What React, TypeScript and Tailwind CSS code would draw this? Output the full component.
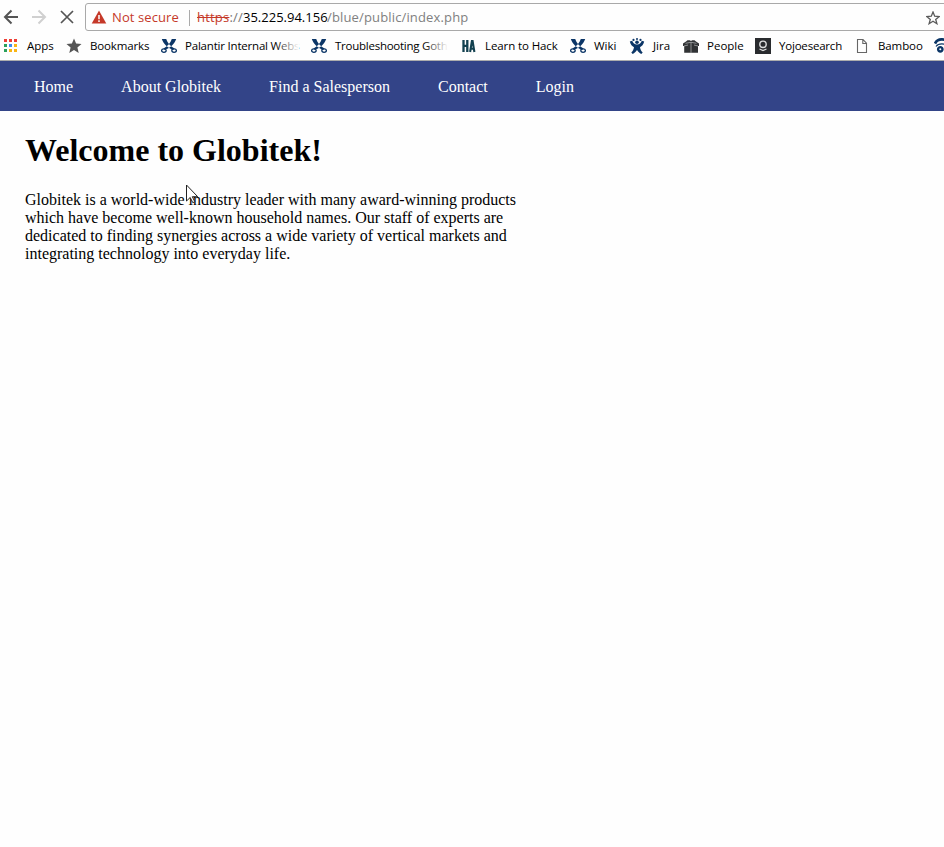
import type { ReactNode } from "react";

const NAVY = "#0b3566";

function AppsIcon() {
  const colors = ["#ee3f35", "#ee3f35", "#ee3f35", "#2aa05c", "#3c8af0", "#f9b514", "#2aa05c", "#f9b514", "#f9b514"];
  return (
    <svg width="16" height="16" viewBox="0 0 16 16" shapeRendering="crispEdges">
      {colors.map((c, i) => (
        <rect key={i} x={1 + (i % 3) * 5} y={1 + Math.floor(i / 3) * 5} width="3" height="3" fill={c} />
      ))}
    </svg>
  );
}

function StarIcon() {
  return (
    <svg width="16" height="16" viewBox="0 0 16 16">
      <path d="M8 .6l2.1 5 5.4.5-4.1 3.5 1.3 5.3L8 12.1l-4.7 2.8 1.3-5.3L.5 6.1l5.400-.5z" fill="#555" />
    </svg>
  );
}

function CrossedIcon() {
  return (
    <svg width="16" height="16" viewBox="0 0 16 16" fill="none" stroke={NAVY}>
      <path d="M.8 1h4.4C6.500 4.800 9 8 13.500 10.500l-1.500 1.500C6.500 9.500 2.500 6 .8 1zM15.200 1h-4.400C9.500 4.800 7 8 2.500 10.500L4 12c5.500-2.500 9.500-6 11.200-11z" fill={NAVY} stroke="none" />
      <ellipse cx="2.900" cy="12.600" rx="2.300" ry="1.700" strokeWidth="1.300" />
      <ellipse cx="13.100" cy="12.600" rx="2.300" ry="1.700" strokeWidth="1.300" />
    </svg>
  );
}

function HackIcon() {
  return (
    <svg width="16" height="16" viewBox="0 0 16 16" fill="none" stroke="#12404f">
      <path d="M2.500 2v12M6.300 2v12M2.500 7.800h4" strokeWidth="2.300" />
      <path d="M9.100 14l1.800-11h.7l1.800 11M10 10.700h3" strokeWidth="2.100" />
    </svg>
  );
}

function JiraIcon() {
  return (
    <svg width="16" height="16" viewBox="0 0 16 16" fill={NAVY}>
      <path d="M.8 3.500l2.400-.7c.8 2.400 2.300 3.700 4.800 3.700s4-1.300 4.800-3.700l2.400.7c-.7 3-2.400 4.800-4.200 5.700.3 2.300 1.300 4 2.700 5.400L12.300 16c-1.800-1-3.200-2.300-4.300-4-1.100 1.700-2.500 3-4.300 4l-1.400-1.400C3.700 13.200 4.700 11.500 5 9.200 3.200 8.300 1.500 6.500.8 3.500z" />
      <circle cx="8" cy="4.300" r="1.800" />
      <circle cx="4.500" cy="1.900" r="1.100" />
      <circle cx="8" cy="1.100" r="1" />
      <circle cx="11.500" cy="1.900" r="1.100" />
    </svg>
  );
}

function PeopleIcon() {
  return (
    <svg width="16" height="16" viewBox="0 0 16 16">
      <path d="M0 5.500l3-2 1.500-1.300h2.300L8 3l1.200-.8h2.300L13 3.500l3 2V8h-1v6.800H1.200V8H0z" fill="#303234" />
      <path d="M2.500 5.300L8 4.300l5.500 1M8 4.300v10.500M1 8l4-1M15 8l-4-1" stroke="#b9babb" strokeWidth=".7" fill="none" />
    </svg>
  );
}

function SearchTileIcon() {
  return (
    <svg width="16" height="16" viewBox="0 0 16 16">
      <path d="M0 0h16v16H0z" fill="#292b2e" />
      <circle cx="8" cy="6.300" r="3.200" fill="none" stroke="#ddd" strokeWidth="1.400" />
      <path d="M4.500 11L8 12.500l3.500-1.500" fill="none" stroke="#ddd" strokeWidth="1.300" />
    </svg>
  );
}

function PageIcon() {
  return (
    <svg width="16" height="16" viewBox="0 0 16 16" fill="none" stroke="#666" strokeWidth="1.100">
      <path d="M3.500 1.500h5.500l3.500 3.700v9.300h-9zM8.800 1.500v4h3.700" />
    </svg>
  );
}

function SwirlIcon() {
  return (
    <svg width="16" height="16" viewBox="0 0 16 16" fill="none" stroke={NAVY}>
      <path d="M1 5.500C3 1.500 8 .3 15 3" strokeWidth="2.800" />
      <path d="M2 8.500C4 5.800 7 5.300 12 6.500" strokeWidth="1.200" />
      <circle cx="6.300" cy="11.300" r="2.200" strokeWidth="2.400" />
    </svg>
  );
}

type BookmarkProps = { icon: ReactNode; label: string; width: string; tracking?: string; faded?: boolean };

function Bookmark({ icon, label, width, tracking = "", faded }: BookmarkProps) {
  return (
    <div className={`flex shrink-0 items-center gap-2 ${width}`}>
      <span className="h-4 w-4 shrink-0">{icon}</span>
      <span className={`relative whitespace-nowrap leading-4 ${tracking}`}>
        {label}
        {faded && <span className="absolute inset-y-0 right-0 w-6 bg-linear-to-r from-transparent to-[#fefefe]" />}
      </span>
    </div>
  );
}

export default function App() {
  return (
    <div className="h-[847px] w-[944px] overflow-hidden bg-[#fefefe] font-['Liberation_Serif',serif] text-black">
      <header className="h-[61px] border-b border-[#adadad] font-['Open_Sans',sans-serif]">
        <div className="flex h-[31px] items-end">
          <div className="flex h-[28px] w-[85px] items-center">
            <svg width="85" height="28" viewBox="0 0 85 28" fill="none" strokeWidth="2">
              <path d="M18 14H5M11.500 7.500L5 14l6.500 6.500" stroke="#555" />
              <path d="M32 14h13M38.500 7.500L45 14l-6.500 6.500" stroke="#d0d0d0" />
              <path d="M61 8l12 12M73 8L61 20" stroke="#555" strokeWidth="1.700" />
            </svg>
          </div>
          <div className="flex h-[28px] w-[870px] shrink-0 items-center rounded-[3px] border border-[#a9a9a9] pl-[5px] pt-px text-[13px]">
            <svg className="-mt-px" width="16" height="14" viewBox="0 0 16 14">
              <path d="M8 .5L15.300 13.500H.7z" fill="#c53929" />
              <path d="M8 5v4.300M8 10.300v1.700" stroke="#fff" strokeWidth="1.500" />
            </svg>
            <span className="ml-[5px] w-[77px] whitespace-nowrap tracking-[0.1px] text-[#c53929]">Not secure</span>
            <span className="h-4 w-px bg-[#aaa]" />
            <span className="ml-[7px] w-[46px] whitespace-nowrap tracking-[0.2px] text-[#777]">
              <span className="text-[#c53929] line-through">https</span>://
            </span>
            <span className="w-[84px] whitespace-nowrap">35.225.94.156</span>
            <span className="whitespace-nowrap tracking-[0.15px] text-[#808080]">/blue/public/index.php</span>
            <svg className="ml-auto mr-[14px]" width="14" height="14" viewBox="0 0 14 14">
              <path d="M7 1l1.700 4.200 4.500.3-3.500 2.900 1.200 4.300L7 10.300l-3.900 2.400 1.200-4.300L.8 5.500l4.500-.3z" fill="none" stroke="#5a5a5a" strokeWidth="1.300" />
            </svg>
          </div>
        </div>
        <div className="flex h-[29px] items-center overflow-hidden pl-[3px] text-[11.5px]">
          <Bookmark icon={<AppsIcon />} label="Apps" width="w-[63px]" />
          <Bookmark icon={<StarIcon />} label="Bookmarks" width="w-[95px]" tracking="tracking-[-0.15px]" />
          <Bookmark icon={<CrossedIcon />} label="Palantir Internal Webs" width="w-[150px]" tracking="tracking-[-0.2px]" faded />
          <Bookmark icon={<CrossedIcon />} label="Troubleshooting Goth" width="w-[150px]" tracking="tracking-[-0.25px]" faded />
          <Bookmark icon={<HackIcon />} label="Learn to Hack" width="w-[109px]" tracking="tracking-[-0.1px]" />
          <Bookmark icon={<CrossedIcon />} label="Wiki" width="w-[59px]" />
          <Bookmark icon={<JiraIcon />} label="Jira" width="w-[54px]" />
          <Bookmark icon={<PeopleIcon />} label="People" width="w-[72px]" />
          <Bookmark icon={<SearchTileIcon />} label="Yojoesearch" width="w-[99px]" tracking="tracking-[-0.2px]" />
          <Bookmark icon={<PageIcon />} label="Bamboo" width="w-[80px]" tracking="tracking-[-0.1px]" />
          <span className="h-4 w-4 shrink-0"><SwirlIcon /></span>
        </div>
      </header>

      <nav className="flex h-[50px] items-center gap-12 bg-[#334488] pl-[34px] pt-px text-base text-white">
        <a>Home</a>
        <a>About Globitek</a>
        <a>Find a Salesperson</a>
        <a>Contact</a>
        <a>Login</a>
      </nav>

      <main className="relative pl-[25px] pt-[21px]">
        <h1 className="text-[32px] leading-[37px] font-bold">Welcome to Globitek!</h1>
        <p className="mt-[22px] whitespace-nowrap text-base leading-[18px]">
          Globitek is a world-wide industry leader with many award-winning products
          <br />
          which have become well-known household names. Our staff of experts are
          <br />
          dedicated to finding synergies across a wide variety of vertical markets and
          <br />
          integrating technology into everyday life.
        </p>
        <svg className="absolute left-[186px] top-[73px]" width="13" height="20" viewBox="0 0 13 20">
          <path d="M.5 1v16l3.700-3.500 2.600 5.200 2-1-2.500-5h5.400z" fill="#fff" stroke="#222" strokeWidth="1" />
        </svg>
      </main>
    </div>
  );
}
